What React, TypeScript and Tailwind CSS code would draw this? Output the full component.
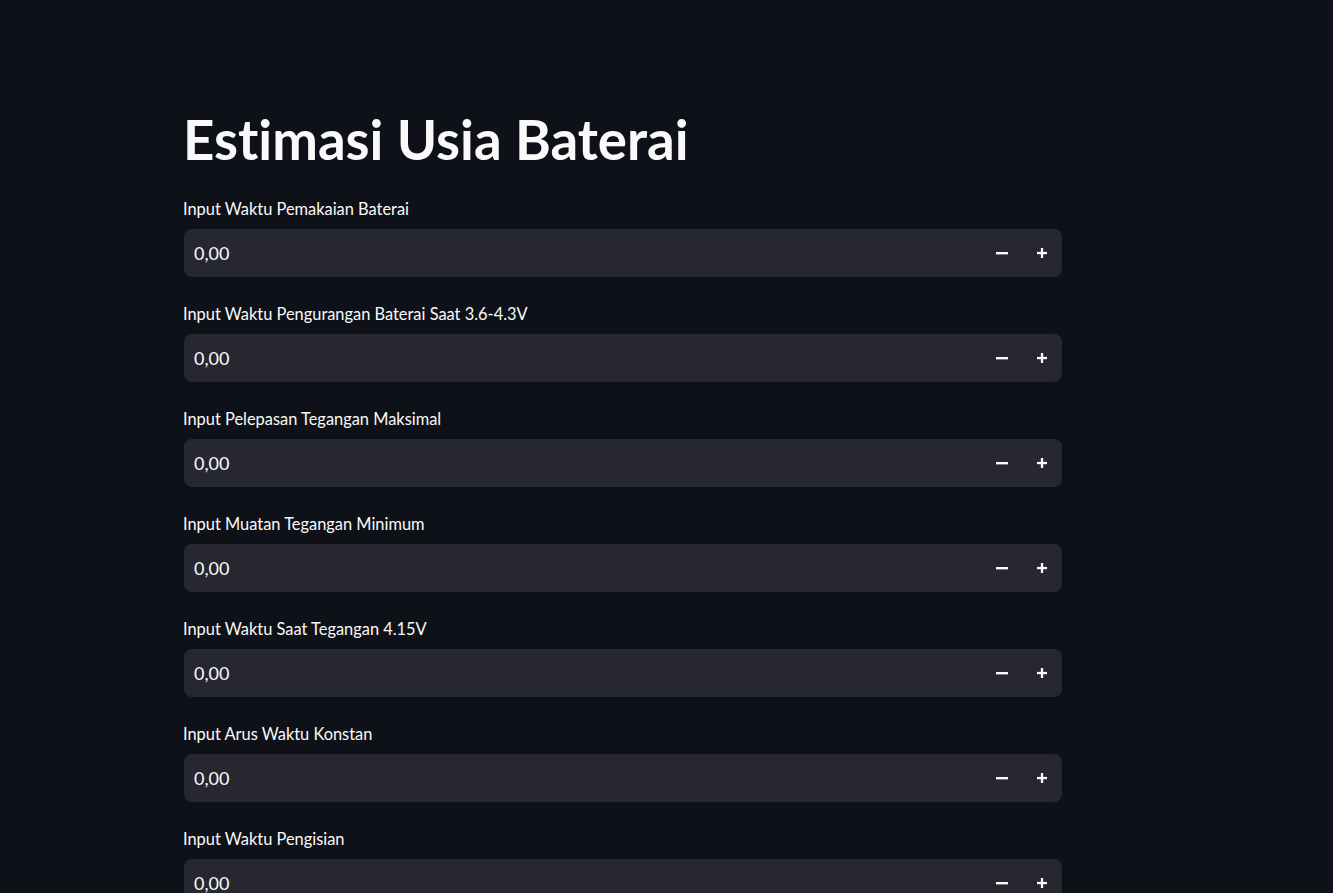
const fields = [
  'Input Waktu Pemakaian Baterai',
  'Input Waktu Pengurangan Baterai Saat 3.6-4.3V',
  'Input Pelepasan Tegangan Maksimal',
  'Input Muatan Tegangan Minimum',
  'Input Waktu Saat Tegangan 4.15V',
  'Input Arus Waktu Konstan',
  'Input Waktu Pengisian',
];

function Minus() {
  return (
    <svg width="12" height="12" viewBox="0 0 12 12">
      <rect x="0" y="5" width="12" height="2.4" fill="#fafafa" />
    </svg>
  );
}

function Plus() {
  return (
    <svg width="12" height="12" viewBox="0 0 12 12">
      <rect x="1" y="4.9" width="10" height="2.3" fill="#fafafa" />
      <rect x="4.85" y="1" width="2.3" height="10" fill="#fafafa" />
    </svg>
  );
}

function NumberField({ label }: { label: string }) {
  return (
    <div className="flex flex-col">
      <label className="text-[16.4px] leading-[23px] text-[#fafafa] mb-[9px]">{label}</label>
      <div className="flex items-center h-[48px] w-[878px] ml-[1px] rounded-[8px] bg-[#262730]">
        <span className="flex-1 pl-[10px] text-[18px] text-[#fafafa]">0,00</span>
        <button className="w-[40px] h-full flex items-center justify-center">
          <Minus />
        </button>
        <button className="w-[40px] h-full flex items-center justify-center">
          <Plus />
        </button>
      </div>
    </div>
  );
}

export default function App() {
  return (
    <div
      className="min-h-screen h-[893px] overflow-hidden bg-[#0e1117] text-[#fafafa] [font-variant-ligatures:none]"
      style={{ fontFamily: 'Lato, "Noto Sans", sans-serif' }}
    >
      <div className="pl-[183px] pt-[104px]">
        <h1 className="text-[54.6px] leading-[70px] font-bold mb-[23px]">Estimasi Usia Baterai</h1>
        <div className="flex flex-col gap-[25px]">
          {fields.map((f) => (
            <NumberField key={f} label={f} />
          ))}
        </div>
      </div>
    </div>
  );
}
